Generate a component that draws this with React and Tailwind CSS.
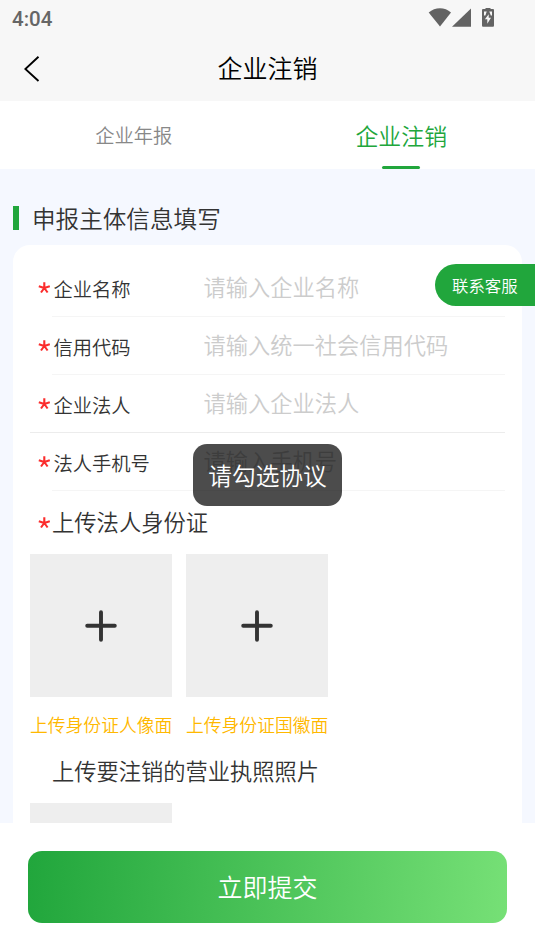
import React from "react";

const fields = [
  { label: "企业名称", hint: "请输入企业名称" },
  { label: "信用代码", hint: "请输入统一社会信用代码" },
  { label: "企业法人", hint: "请输入企业法人", fullLine: true },
  { label: "法人手机号", hint: "请输入手机号" },
];

function Star({ className = "" }) {
  return (
    <svg className={className} width="12" height="12" viewBox="0 0 12 12" fill="none" stroke="#fb2c2c" strokeWidth="2.1">
      <path d="M6.3 6V0.3M6.3 6L0.8 4.2M6.3 6L11.8 4.2M6.3 6L3 10.5M6.3 6L9.6 10.5" />
    </svg>
  );
}

function StatusBar() {
  return (
    <div className="flex h-9 items-center justify-between pl-3 pr-10">
      <span className="pt-[2px] font-[Roboto] text-[20.5px] font-medium leading-none text-[#666]">4:04</span>
      <div className="flex items-start">
        <svg width="24" height="20" viewBox="0 0 24 20" fill="#636363">
          <path d="M0.7 4.6C7-1.2 17-1.2 23 4.6L12 18.6Z" />
        </svg>
        <svg width="20" height="20" viewBox="0 0 20 20" fill="#636363">
          <path d="M0 18.8 19 0.4V18.8Z" />
        </svg>
        <svg className="ml-[9px]" width="14" height="20" viewBox="0 0 14 20">
          <path d="M4.5 -0.5H9.5V1H12Q13 1 13 2V17.5Q13 18.7 12 18.7H2Q1 18.7 1 17.5V2Q1 1 2 1H4.5Z" fill="#636363" />
          <path d="M7.7 6.2 3.9 11.3H6.3V15.8L10 9.8H7.7ZM3 3.5H5.7L4.4 7.5H3ZM8.3 3.5H11V7.5H9.8Z" fill="#f7f7f7" />
        </svg>
      </div>
    </div>
  );
}

function UploadBox() {
  return (
    <div className="flex h-[143px] w-[142px] shrink-0 items-center justify-center bg-[#eee]">
      <svg width="32" height="32" viewBox="0 0 32 32" stroke="#333" strokeWidth="3.9" strokeLinecap="round">
        <path d="M16 2.2V29.8M2.2 15.7H29.8" />
      </svg>
    </div>
  );
}

export default function App() {
  return (
    <div className="relative flex h-[951px] w-[535px] flex-col overflow-hidden bg-white font-['Noto_Sans_CJK_SC',sans-serif] font-[350] text-[#333]">
      <header className="h-[101px] shrink-0 bg-[#f7f7f7]">
        <StatusBar />
        <div className="grid h-[65px] grid-cols-[1fr_auto_1fr] items-center">
          <svg className="ml-6" width="16" height="26" viewBox="0 0 16 26" fill="none" stroke="#000" strokeWidth="1.9">
            <path d="M14.5 0.8 1.3 13 14.5 25" />
          </svg>
          <h1 className="pb-[3px] text-[25px] font-[350] leading-none text-black">企业注销</h1>
        </div>
      </header>

      <nav className="grid h-[68px] shrink-0 grid-cols-2">
        <div className="flex items-center justify-center pt-[2px] text-[19.3px] leading-none text-[#888]">企业年报</div>
        <div className="flex flex-col items-center justify-end text-[22.9px] leading-none text-[#21a63c]">
          <span className="mb-[19px]">企业注销</span>
          <span className="h-[3px] w-[38px] rounded-full bg-[#21a63c]" />
        </div>
      </nav>

      <main className="flex h-[654px] shrink-0 flex-col overflow-hidden bg-[#f5f8ff] px-[13px]">
        <div className="flex h-[76px] shrink-0 items-end pb-[15px]">
          <span className="h-6 w-[6px] bg-[#21a63c]" />
          <h2 className="ml-[13px] text-[23.6px] font-[350] leading-6">申报主体信息填写</h2>
        </div>
        <section className="min-h-[600px] rounded-t-[17px] bg-white pl-[17px] pr-[17px] pt-[14px]">
          {fields.map((f) => (
            <div
              key={f.label}
              className={"flex h-[58px] flex-col " + (f.fullLine ? "border-b border-[#ececec]" : "")}
            >
              <div className="flex min-h-0 flex-1 items-center">
                <Star className="mt-px ml-2" />
                <span className="ml-[3.5px] w-[150px] pt-[4px] text-[19.3px] leading-none">{f.label}</span>
                <span className="pb-[2px] text-[22.25px] leading-none text-[#ccc]">{f.hint}</span>
              </div>
              {!f.fullLine && <div className="ml-[22px] h-px bg-[#f5f5f5]" />}
            </div>
          ))}
          <div className="flex h-[63px] items-center">
            <Star className="mt-px ml-2" />
            <span className="ml-[2px] pb-[2px] text-[22.3px] leading-none">上传法人身份证</span>
          </div>
          <div className="flex gap-[14px]">
            <UploadBox />
            <UploadBox />
          </div>
          <div className="flex h-[50px] items-center gap-[14px] pt-[5px] text-[17.8px] leading-none text-[#ffb800]">
            <span className="w-[142px] whitespace-nowrap">上传身份证人像面</span>
            <span className="w-[142px] whitespace-nowrap">上传身份证国徽面</span>
          </div>
          <div className="flex h-[56px] items-center pb-[10px] pl-[22px] text-[22.25px] leading-none">上传要注销的营业执照照片</div>
          <UploadBox />
        </section>
      </main>

      <footer className="flex flex-1 justify-center pt-[28.4px]">
        <button className="flex h-[71.6px] w-[479px] items-center justify-center rounded-[14px] bg-[linear-gradient(94deg,#21a63c,#76e076)] pb-[2px] text-[25px] font-[350] leading-none text-white">
          立即提交
        </button>
      </footer>

      <div className="absolute right-0 top-[264.4px] flex h-[41.6px] w-[100px] items-center rounded-l-full bg-[#21a63c] pl-[17px] text-[16.4px] leading-none text-white">
        联系客服
      </div>
      <div className="absolute left-[193px] top-[444px] flex h-[62px] w-[149px] items-center justify-center rounded-[14px] bg-black/70 pt-[2px] text-[23.7px] leading-none text-white">
        请勾选协议
      </div>
    </div>
  );
}
